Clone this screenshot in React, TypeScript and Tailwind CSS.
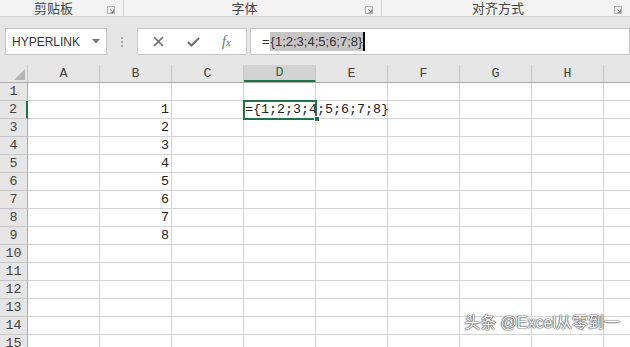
const cols = ['A', 'B', 'C', 'D', 'E', 'F', 'G', 'H', 'I'];
const rows = Array.from({ length: 15 }, (_, i) => i + 1);

const values: Record<number, string> = { 2: '1', 3: '2', 4: '3', 5: '4', 6: '5', 7: '6', 8: '7', 9: '8' };

function Launcher() {
  return (
    <svg width="8" height="8" viewBox="0 0 8 8" className="shrink-0">
      <path d="M0.5 7.5V0.5H7.5V7.5Z" fill="none" stroke="#b0b0b0" />
      <path d="M3 3L6.5 6.5M6.5 3.5V6.5H3.5" fill="none" stroke="#8a8a8a" />
    </svg>
  );
}

function RibbonGroup({ label, width, last }: { label: string; width: string; last?: boolean }) {
  return (
    <div className={`${width} flex items-center h-full ${last ? '' : 'border-r border-[#d2d2d2]'}`}>
      <span className="flex-1 text-center text-[13px] text-[#444] leading-none">{label}</span>
      <div className="w-[16px] flex justify-start pt-[4px]">
        <Launcher />
      </div>
    </div>
  );
}

export default function App() {
  return (
    <div
      className="w-[630px] h-[347px] overflow-hidden relative bg-white"
      style={{ fontFamily: '"Liberation Sans", "Noto Sans CJK SC", sans-serif' }}
    >
      {/* ribbon group labels */}
      <div className="h-[17px] bg-[#f3f3f3] border-b border-[#d5d5d5] flex">
        <RibbonGroup label="剪贴板" width="w-[124px]" />
        <RibbonGroup label="字体" width="w-[258px]" />
        <RibbonGroup label="对齐方式" width="w-[248px]" last />
      </div>

      {/* formula bar */}
      <div className="h-[48px] bg-[#e6e6e6] flex items-start pt-[11px]">
        <div className="ml-[5px] w-[102px] h-[27px] bg-white border border-[#c6c6c6] flex items-center pl-[6px] pr-[6px]">
          <span className="flex-1 text-[12px] text-[#333]">HYPERLINK</span>
          <svg width="8" height="5" viewBox="0 0 8 5">
            <path d="M0 0H8L4 4.5Z" fill="#777" />
          </svg>
        </div>
        <div className="w-[30px] h-[27px] flex flex-col items-center justify-center gap-[2px]">
          <div className="w-[2px] h-[2px] bg-[#a8a8a8]" />
          <div className="w-[2px] h-[2px] bg-[#a8a8a8]" />
          <div className="w-[2px] h-[2px] bg-[#a8a8a8]" />
        </div>
        <div className="w-[110px] h-[27px] bg-white border border-[#c6c6c6] flex items-center justify-around px-[4px]">
          <svg width="11" height="11" viewBox="0 0 11 11">
            <path d="M1 1L10 10M10 1L1 10" stroke="#6e6e6e" strokeWidth="1.6" />
          </svg>
          <svg width="13" height="10" viewBox="0 0 13 10">
            <path d="M1 5L4.5 8.5L12 1" fill="none" stroke="#6e6e6e" strokeWidth="2" />
          </svg>
          <span className="text-[14px] italic text-[#6e6e6e]" style={{ fontFamily: '"Liberation Serif", serif' }}>
            f<span className="text-[11px]">x</span>
          </span>
        </div>
        <div className="ml-[3px] flex-1 h-[27px] bg-white border border-[#c6c6c6] flex items-center pl-[11px]">
          <span className="text-[13px] text-[#333]">=</span>
          <span className="text-[13px] text-[#333] bg-[#c6c6c6] leading-[19px] px-[1px]">{'{1;2;3;4;5;6;7;8}'}</span>
          <div className="w-[2px] h-[19px] bg-black" />
        </div>
      </div>

      {/* sheet grid */}
      <div className="text-[13.33px] text-[#222]" style={{ fontFamily: '"Liberation Mono", "Noto Sans CJK SC", monospace' }}>
        <div className="flex h-[18px] bg-[#e6e6e6] border-b border-[#ababab]">
          <div className="w-[28px] shrink-0 border-r border-[#c6c6c6] flex items-end justify-end pr-[2px] pb-[2px]">
            <svg width="11" height="11" viewBox="0 0 11 11">
              <path d="M11 0V11H0Z" fill="#b5b5b5" />
            </svg>
          </div>
          {cols.map((c) => (
            <div
              key={c}
              className={`w-[72px] shrink-0 border-r border-[#c6c6c6] flex items-center justify-center leading-none ${
                c === 'D' ? 'bg-[#d3d3d3] text-[#217346] border-b-2 border-b-[#217346]' : 'text-[#444]'
              }`}
            >
              {c === 'I' ? '' : c}
            </div>
          ))}
        </div>
        {rows.map((r) => (
          <div key={r} className="flex h-[18px]">
            <div
              className={`w-[28px] shrink-0 bg-[#e6e6e6] border-b border-[#c6c6c6] flex items-center justify-center leading-none text-[#444] ${
                r === 2 ? 'border-r-2 border-r-[#217346]' : 'border-r border-r-[#ababab]'
              }`}
            >
              {r}
            </div>
            {cols.map((c) => {
              const isSel = r === 2 && c === 'D';
              return (
                <div
                  key={c}
                  className={`w-[72px] shrink-0 border-b border-[#d4d4d4] flex items-center leading-none relative ${
                    isSel ? 'z-10' : 'border-r'
                  } ${c === 'B' ? 'justify-end pr-[2px]' : 'pl-[1px]'}`}
                >
                  {c === 'B' && values[r]}
                  {isSel && (
                    <>
                      <span className="whitespace-nowrap">{'={1;2;3;4;5;6;7;8}'}</span>
                      <div className="absolute -left-[1px] -top-[1px] w-[74px] h-[20px] border-2 border-[#217346]" />
                      <div className="absolute -right-[4px] -bottom-[4px] w-[6px] h-[6px] bg-[#217346] border border-white" />
                    </>
                  )}
                </div>
              );
            })}
          </div>
        ))}
      </div>

      {/* watermark */}
      <div
        className="absolute right-[10px] bottom-[16px] text-[16px] text-white leading-none"
        style={{ textShadow: '0 0 1px #333, 0 0 1px #333, 0 0 2px #666' }}
      >
        头条 @Excel从零到一
      </div>
    </div>
  );
}
